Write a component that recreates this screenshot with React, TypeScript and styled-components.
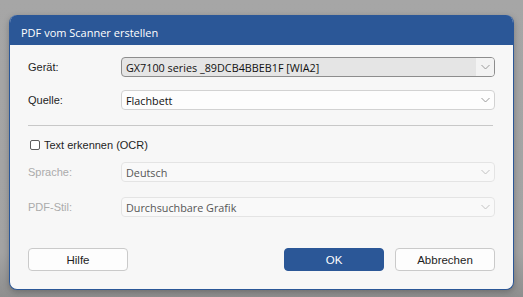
import styled, { createGlobalStyle } from "styled-components";

const GlobalStyle = createGlobalStyle`
    html, body {
        margin: 0;
        padding: 0;
        background: #a5a5a5;
        width: 523px;
        height: 297px;
        overflow: hidden;
    }
`;

const Screen = styled.div`
    width: 523px;
    height: 297px;
    padding: 15px 9px 0 9px;
    box-sizing: border-box;
    background: linear-gradient(#a6a6a6 0%, #a3a3a3 85%, #8e8e8e 100%);
`;

const Dialog = styled.div`
    width: 505px;
    height: 275px;
    box-sizing: border-box;
    background: #f7f7f7;
    border: 1px solid #2b5797;
    border-top: none;
    border-radius: 8px;
    overflow: hidden;
    box-shadow: 0 2px 6px rgba(0, 0, 0, 0.25);
    display: flex;
    flex-direction: column;
`;

const TitleBar = styled.div`
    height: 30px;
    flex: none;
    background: #2b5797;
    color: #ffffff;
    font-family: "Open Sans", sans-serif;
    font-size: 11px;
    display: flex;
    align-items: center;
    padding: 4px 0 0 11px;
    box-sizing: border-box;
`;

const Content = styled.div`
    flex: 1;
    padding: 0 18px 0 18px;
    display: flex;
    flex-direction: column;
`;

const Row = styled.div<{ $top: number }>`
    display: grid;
    grid-template-columns: 93px 1fr;
    align-items: center;
    margin-top: ${p => p.$top}px;
`;

const Label = styled.span<{ $disabled?: boolean }>`
    font-family: "Liberation Sans", Arial, sans-serif;
    font-size: 11px;
    color: ${p => (p.$disabled ? "#ababab" : "#1e1e1e")};
`;

const Select = styled.div<{ $variant: "focus" | "normal" | "disabled" }>`
    height: 20px;
    box-sizing: border-box;
    display: flex;
    align-items: center;
    border-radius: 4px;
    overflow: hidden;
    border: 1px solid
        ${p => (p.$variant === "focus" ? "#8d8d8d" : p.$variant === "normal" ? "#d2d2d2" : "#e4e4e4")};
    background: ${p => (p.$variant === "focus" ? "#e5e5e5" : p.$variant === "normal" ? "#fdfdfd" : "#f9f9f9")};
    font-family: "Open Sans", sans-serif;
    font-size: 10.8px;
    color: ${p => (p.$variant === "disabled" ? "#555555" : "#111111")};
`;

const Value = styled.span`
    flex: 1;
    padding-left: 4px;
    white-space: nowrap;
    overflow: hidden;
`;

const Arrow = styled.span<{ $focus?: boolean }>`
    width: 18px;
    height: 100%;
    display: flex;
    align-items: center;
    justify-content: center;
    background: ${p => (p.$focus ? "#f3f3f3" : "transparent")};
`;

const Separator = styled.div`
    height: 1px;
    background: #c8c8c8;
    margin: 15px 2px 0 0;
`;

const CheckRow = styled.label`
    display: flex;
    align-items: center;
    gap: 4px;
    height: 14px;
    margin-top: 12px;
    padding-left: 2px;
`;

const Box = styled.span`
    width: 10px;
    height: 10px;
    box-sizing: border-box;
    border: 1px solid #5c5c5c;
    border-radius: 2px;
    background: #ffffff;
`;

const Buttons = styled.div`
    display: flex;
    gap: 11px;
    margin-top: 31px;
`;

const Spacer = styled.div`
    flex: 1;
`;

const Button = styled.button<{ $primary?: boolean }>`
    width: 100px;
    height: 23px;
    box-sizing: border-box;
    border-radius: 4px;
    border: 1px solid ${p => (p.$primary ? "#2b5797" : "#cacaca")};
    background: ${p => (p.$primary ? "#2b5797" : "#fdfdfd")};
    color: ${p => (p.$primary ? "#ffffff" : "#1e1e1e")};
    font-family: "Liberation Sans", Arial, sans-serif;
    font-size: 11.5px;
    padding: 0;
`;

const Chevron = ({ color }: { color: string }) => (
    <svg width="9" height="6" viewBox="0 0 9 6">
        <path d="M0.5 1 L4.5 5 L8.5 1" fill="none" stroke={color} strokeWidth="1" />
    </svg>
);

const Dropdown = ({ value, variant }: { value: string; variant: "focus" | "normal" | "disabled" }) => (
    <Select $variant={variant}>
        <Value>{value}</Value>
        <Arrow $focus={variant === "focus"}>
            <Chevron color={variant === "disabled" ? "#c2c2c2" : "#9a9a9a"} />
        </Arrow>
    </Select>
);

export default function App() {
    return (
        <>
            <GlobalStyle />
            <Screen>
                <Dialog>
                    <TitleBar>PDF vom Scanner erstellen</TitleBar>
                    <Content>
                        <Row $top={12}>
                            <Label>Gerät:</Label>
                            <Dropdown value="GX7100 series _89DCB4BBEB1F [WIA2]" variant="focus" />
                        </Row>
                        <Row $top={13}>
                            <Label>Quelle:</Label>
                            <Dropdown value="Flachbett" variant="normal" />
                        </Row>
                        <Separator />
                        <CheckRow>
                            <Box />
                            <Label>Text erkennen (OCR)</Label>
                        </CheckRow>
                        <Row $top={10}>
                            <Label $disabled>Sprache:</Label>
                            <Dropdown value="Deutsch" variant="disabled" />
                        </Row>
                        <Row $top={15}>
                            <Label $disabled>PDF-Stil:</Label>
                            <Dropdown value="Durchsuchbare Grafik" variant="disabled" />
                        </Row>
                        <Buttons>
                            <Button>Hilfe</Button>
                            <Spacer />
                            <Button $primary>OK</Button>
                            <Button>Abbrechen</Button>
                        </Buttons>
                    </Content>
                </Dialog>
            </Screen>
        </>
    );
}
